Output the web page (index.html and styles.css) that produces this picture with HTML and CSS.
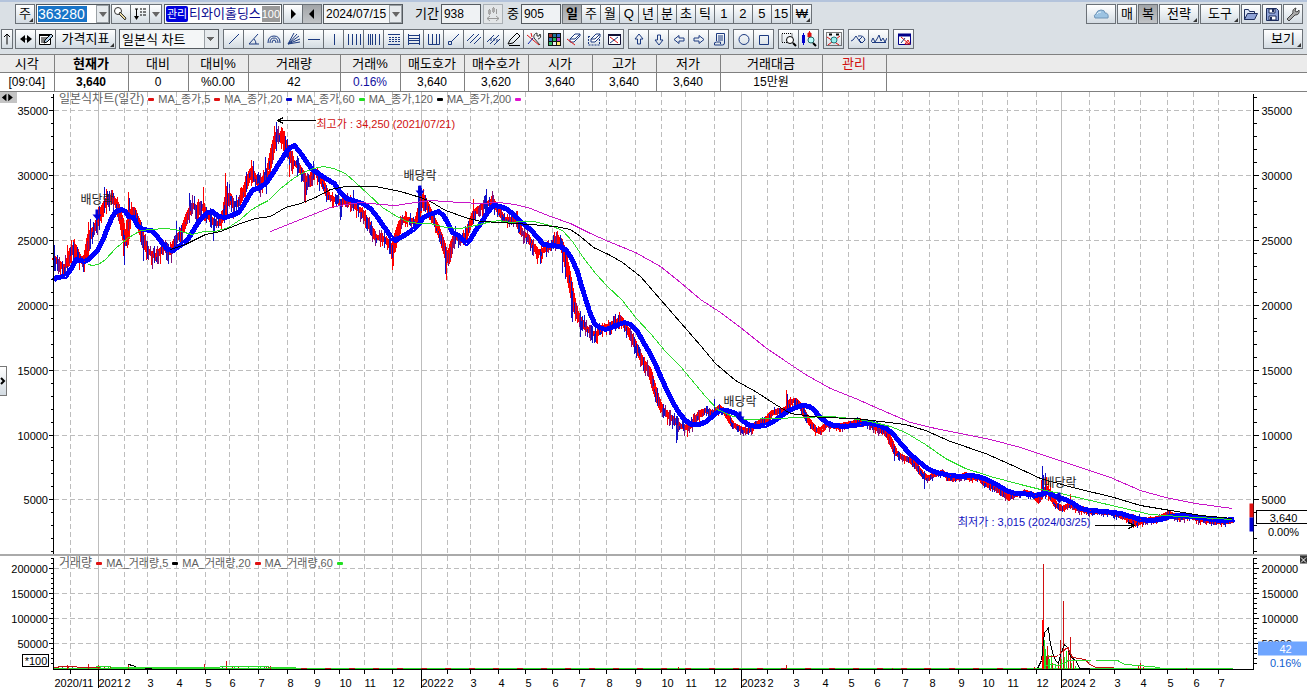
FILE: index.html
```html
<!DOCTYPE html>
<html lang="ko">
<head>
  <meta charset="UTF-8">
  <title>티와이홀딩스 - 종합차트</title>
  <link rel="stylesheet" href="styles.css">
</head>
<body>

<header class="toolbar">
  <div class="bar bar-main">
    <button class="btn corner">주</button>
    <div class="combo code"><input type="text" value="363280" aria-label="종목코드"><button aria-label="종목 목록"><i class="down"></i></button></div>
    <div class="group">
      <button class="btn" aria-label="종목 찾기"><svg viewBox="0 0 16 16"><circle cx="5" cy="5" r="3.5" fill="#fff" stroke="#333"/><path d="M7 6l6 6-1 2-6-6z" fill="#e8d9a0" stroke="#333"/></svg></button>
      <button class="btn" aria-label="정렬"><svg viewBox="0 0 16 16"><path d="M3 3h3M4.500 3v10" stroke="#000" fill="none"/><path d="M2 10h5l-2.500 4z"/><path d="M8 3h2m1 0h3M8 6h2m1 0h3M8 9h2m1 0h3" stroke="#000"/></svg></button>
      <button class="btn slim" aria-label="정렬 목록"><i class="down"></i></button>
    </div>
    <div class="stock"><b>관리</b><span>티와이홀딩스</span><em>100</em></div>
    <div class="group">
      <button class="btn" aria-label="다음"><svg viewBox="0 0 16 16"><path d="M6 3v10l5-5z"/></svg></button>
      <button class="btn dark" aria-label="이전"><svg viewBox="0 0 16 16"><path d="M10 3v10l-5-5z"/></svg></button>
    </div>
    <div class="combo date"><input type="text" value="2024/07/15" aria-label="날짜"><button aria-label="달력"><i class="down"></i></button></div>
    <label class="field first">기간<input type="text" value="938"></label>
    <button class="btn off" disabled aria-label="봉 간격"><svg viewBox="0 0 16 16"><path d="M4.500 3v6M8.500 1v6M11.500 3v5" stroke="#999" fill="none"/><path d="M3 4h3v4H3zM7 2h3v4H7z" fill="#aaa"/><path d="M2 12.500h12M5 10l-3 2.500L5 15M11 10l3 2.500-3 2.500" stroke="#999" fill="none"/></svg></button>
    <label class="field">중<input type="text" value="905"></label>
    <div class="group periods">
      <button class="btn dark on">일</button><button class="btn">주</button><button class="btn">월</button><button class="btn">Q</button><button class="btn">년</button><button class="btn">분</button><button class="btn">초</button><button class="btn">틱</button><button class="btn">1</button><button class="btn">2</button><button class="btn">5</button><button class="btn">15</button>
    </div>
    <button class="btn corner">₩</button>
    <div class="right">
      <button class="btn wide" aria-label="클라우드"><svg viewBox="0 0 16 16"><path d="M2 12q-2-3 1-4 1-4 5-4 4 0 4 3 4 0 3 5z" fill="#9cc3e2" stroke="#6f95b8"/><path d="M4 8q1-2 4-2" stroke="#e2f2fc" fill="none"/></svg></button>
      <button class="btn">매</button>
      <button class="btn dark">복</button>
      <button class="btn menu corner">전략</button>
      <button class="btn menu corner">도구</button>
      <button class="btn" aria-label="열기"><svg viewBox="0 0 16 16"><path d="M1.500 13.500v-10h4l1 2h5v2" fill="#dde5f5" stroke="#1c2c5c"/><path d="M1.500 13.500l3-6h10l-3 6z" fill="#8ea2d6" stroke="#1c2c5c"/></svg></button>
      <button class="btn" aria-label="저장"><svg viewBox="0 0 16 16"><path d="M2.500 2.500h10l2 2v10h-12z" fill="#8ea2d6" stroke="#1c2c5c"/><path d="M5 3h6v4H5zM5 10h7v4H5z" fill="#fff" stroke="#1c2c5c"/><path d="M8 3h2v3H8zM6 11h2v3H6z" fill="#1c2c5c"/></svg></button>
      <button class="btn" aria-label="설정"><svg viewBox="0 0 16 16"><path d="M2 13l6-6q-1-4 3-5l-1 3 2 1 2-2q1 5-4 5l-6 6z" fill="#aaa" stroke="#444"/></svg></button>
    </div>
  </div>

  <div class="bar bar-draw">
    <button class="btn tiny" aria-label="위로"><svg viewBox="0 0 10 16"><path d="M5 13.500V3M2 6l3-3 3 3" stroke="#000" fill="none"/></svg></button>
    <div class="group">
      <button class="btn" aria-label="좌우"><svg viewBox="0 0 16 16"><path d="M7 4v8L2 8zM9 4v8l5-4z"/><path d="M5 8h6" stroke="#000"/></svg></button>
      <button class="btn" aria-label="편집"><svg viewBox="0 0 16 16"><path d="M1.500 3.500h11v10h-11z" fill="#fff" stroke="#000"/><path d="M1 4h12" stroke="#000" stroke-width="2"/><path d="M3 7h7M3 9h5M3 11h3" stroke="#000"/><path d="M6 12l1-3 6-6 2 2-6 6z" fill="#b7d2ea" stroke="#000"/></svg></button>
      <button class="btn indicator corner">가격지표</button>
    </div>
    <select class="kind" aria-label="차트 종류"><option>일본식 차트</option></select>
    <div class="group ink">
      <button class="btn" aria-label="추세선"><svg viewBox="0 0 16 16"><path d="M3 13L13 3"/></svg></button>
      <button class="btn" aria-label="각도선"><svg viewBox="0 0 16 16"><path d="M12 3L3 13h10M8 8q2 2 2 5"/></svg></button>
      <button class="btn" aria-label="원호"><svg viewBox="0 0 16 16"><path d="M2 12q0-7 6-7t6 7M4 12q0-5 4-5t4 5M6 12q0-3 2-3t2 3"/></svg></button>
      <button class="btn" aria-label="부채선"><svg viewBox="0 0 16 16"><path d="M2 13L8 2M2 13l9-10M2 13l11-8M2 13l12-5M2 13l12-2"/></svg></button>
      <button class="btn" aria-label="수평선"><svg viewBox="0 0 16 16"><path d="M2 8.500h12"/></svg></button>
      <button class="btn" aria-label="수직선"><svg viewBox="0 0 16 16"><path d="M8.500 3v11"/></svg></button>
      <button class="btn" aria-label="시간대"><svg viewBox="0 0 16 16"><path d="M2.500 3v11M6.500 3v11M10.500 3v11M14.500 3v11"/></svg></button>
      <button class="btn" aria-label="피보나치 시간대"><svg viewBox="0 0 16 16"><path d="M2.500 3v11M4.500 3v11M6.500 3v11M9.500 3v11M13.500 3v11"/></svg></button>
      <button class="btn" aria-label="되돌림"><svg viewBox="0 0 16 16"><path d="M2 3.500h12M2 13.500h12"/><path d="M3 6.500h11M3 8.500h11M3 10.500h11" stroke-dasharray="2 1"/></svg></button>
      <button class="btn" aria-label="분할선"><svg viewBox="0 0 16 16"><path d="M2.500 3v11M13.500 3v11M3 4.500h10M3 7.500h10M3 9.500h10M3 12.500h10"/></svg></button>
      <button class="btn" aria-label="주기선"><svg viewBox="0 0 16 16"><path d="M2.500 3v10.500h11V3M6.500 3v10M10.500 3v10"/></svg></button>
      <button class="btn" aria-label="선분"><svg viewBox="0 0 16 16"><path d="M2.500 10.500h3v3h-3zM5 11l8-8"/></svg></button>
      <button class="btn" aria-label="평행선"><svg viewBox="0 0 16 16"><path d="M1 10l7-7M4 12l9-9M8 13l7-7"/></svg></button>
      <button class="btn" aria-label="등분선"><svg viewBox="0 0 16 16"><path d="M1 11l7-7M4 13l9-9M8 14l6-6M5 7v3M8 7v3M11 8v3"/></svg></button>
      <button class="btn" aria-label="펜"><svg viewBox="0 0 16 16"><path d="M2 13l2-4 7-7 3 3-7 7zM3 14.500h11" stroke="#000"/></svg></button>
      <button class="btn" aria-label="도구 설정"><svg viewBox="0 0 16 16"><path d="M1 4l12 10M5 2l1 4" stroke="#d11"/><path d="M2 13l5-6" stroke="#12a"/><path d="M14 14L8 7q-1-4 3-5v3h2l1-2q2 4-2 5" stroke="#333"/></svg></button>
      <button class="btn" aria-label="색상"><svg class="solid" viewBox="0 0 16 16"><path fill="#111" d="M2 2h13v13H2z"/><path d="M3 3h3v3H3z" fill="#a33"/><path d="M7 3h3v3H7z" fill="#279"/><path d="M11 3h3v3h-3z" fill="#36c"/><path d="M3 7h3v3H3z" fill="#37b"/><path d="M7 7h3v3H7z" fill="#2b5"/><path d="M11 7h3v3h-3z" fill="#b4c"/><path d="M3 11h3v3H3z" fill="#3b6"/><path d="M7 11h3v3H7z" fill="#eee"/><path d="M11 11h3v3h-3z" fill="#fe6"/></svg></button>
      <button class="btn" aria-label="지우기"><svg viewBox="0 0 16 16"><path d="M4 8l5-5h5l-5 5zM4 8v3h4l6-6V3" fill="#fff"/><path d="M1 8l8 6" stroke="#d11"/></svg></button>
      <button class="btn" aria-label="모두 지우기"><svg viewBox="0 0 16 16"><path d="M2 5.500h3M2.500 5v9h11V8" stroke-dasharray="2 1"/><path d="M5 8l5-5h4l-5 5zM5 8v3h4l5-5V3" fill="#fff"/></svg></button>
      <button class="btn" aria-label="선 삭제"><svg viewBox="0 0 16 16"><path d="M2.500 3.500h12v10h-12z" fill="#fff" stroke="#113"/><path d="M2 4h13" stroke="#113" stroke-width="2"/><path d="M4 6l8 6" stroke="#d11"/><path d="M4 12l8-6"/></svg></button>
    </div>
    <div class="group ink">
      <button class="btn" aria-label="위 화살표"><svg viewBox="0 0 16 16"><path d="M8 3l4 5h-2.500v5h-3V8H4z"/></svg></button>
      <button class="btn" aria-label="아래 화살표"><svg viewBox="0 0 16 16"><path d="M8 14l4-5h-2.500V4h-3v5H4z"/></svg></button>
      <button class="btn" aria-label="왼쪽 화살표"><svg viewBox="0 0 16 16"><path d="M3 8.500l5-4V7h5v3H8v2.500z"/></svg></button>
      <button class="btn" aria-label="오른쪽 화살표"><svg viewBox="0 0 16 16"><path d="M13 8.500l-5-4V7H3v3h5v2.500z"/></svg></button>
      <button class="btn" aria-label="메모"><svg viewBox="0 0 16 16"><path d="M5.500 10V2.500h8V12q0 2-2 2h-8q-1-3 2-3h4v2M7 5h5M7 7h5M7 9h5"/></svg></button>
    </div>
    <div class="group ink">
      <button class="btn" aria-label="원"><svg viewBox="0 0 16 16"><circle cx="8" cy="8.500" r="5"/></svg></button>
      <button class="btn" aria-label="사각형"><svg viewBox="0 0 16 16"><path d="M3.500 4.500h9v9h-9z"/></svg></button>
    </div>
    <div class="group ink">
      <button class="btn" aria-label="영역 확대"><svg viewBox="0 0 16 16"><path d="M1 2.500h10v9H1z" stroke="#000" stroke-dasharray="1 1"/><circle cx="9" cy="9" r="3.500" stroke="#000" fill="#fff"/><path d="M12 12l3 3" stroke="#000" stroke-width="2"/></svg></button>
      <button class="btn" aria-label="봉 확대"><svg viewBox="0 0 16 16"><path d="M2.500 4v8" stroke="#00c" stroke-width="3"/><path d="M2.500 2v12" stroke="#00c"/><path d="M8.500 0v9" stroke="#d11"/><path d="M7 2h3v4H7z" fill="#d11" stroke="#d11"/><circle cx="10" cy="9" r="3" fill="#bff" stroke="#266"/><path d="M12 12l3 3" stroke="#000" stroke-width="2"/></svg></button>
    </div>
    <div class="group ink">
      <button class="btn" aria-label="전체 보기"><svg viewBox="0 0 16 16"><path d="M.5 1.500h15v13H.5z" stroke="#000" stroke-dasharray="1 1"/><path d="M3 3.500h3M10 3.500h3" stroke="#000" stroke-width="2"/><path d="M1 6l12 8M2 14L14 5" stroke="#d11"/><circle cx="8" cy="9" r="3" fill="#9ee" stroke="#277"/></svg></button>
    </div>
    <div class="group ink">
      <button class="btn" aria-label="패턴 검색"><svg viewBox="0 0 16 16"><path d="M0 10l2-1 3-4 4 6 1 1M7 5q6-1 7 4l-3 3-3-3 3-3"/></svg></button>
      <button class="btn" aria-label="패턴"><svg viewBox="0 0 16 16"><path d="M0 11l2-4 2 4 2-3 2-4 2 6 2-3 2 4 2-4M1 11.500h14"/></svg></button>
    </div>
    <div class="group ink">
      <button class="btn" aria-label="차트 닫기"><svg viewBox="0 0 16 16"><path d="M2.500 3.500h12v10h-12z" fill="#fff" stroke="#008"/><path d="M2 4h13" stroke="#008" stroke-width="3"/><path d="M5 6l8 7M9 13l3-4 2 4z" stroke="#d11"/><path d="M5 12l4-5"/></svg></button>
    </div>
    <div class="right"><button class="btn menu corner">보기</button></div>
  </div>
</header>

<table class="quote">
  <colgroup>
    <col class="w54"><col class="w74"><col class="w60"><col class="w60"><col class="w92"><col class="w60">
    <col class="w64"><col class="w64"><col class="w64"><col class="w64"><col class="w64"><col class="w102"><col class="w64"><col>
  </colgroup>
  <thead>
    <tr><th>시각</th><th class="strong">현재가</th><th>대비</th><th>대비%</th><th>거래량</th><th>거래%</th><th>매도호가</th><th>매수호가</th><th>시가</th><th>고가</th><th>저가</th><th>거래대금</th><th class="warn">관리</th><th></th></tr>
  </thead>
  <tbody>
    <tr><td>[09:04]</td><td class="strong">3,640</td><td>0</td><td>%0.00</td><td>42</td><td class="blue">0.16%</td><td>3,640</td><td>3,620</td><td>3,640</td><td>3,640</td><td>3,640</td><td>15만원</td><td></td><td></td></tr>
  </tbody>
</table>

<main class="chart">
  <svg id="plot"></svg>
  <div class="legend price-legend">
    <span class="title">일본식차트(일간)</span><i class="red"></i><span>MA_종가,5</span><i class="red"></i><span>MA_종가,20</span><i class="navy"></i><span>MA_종가,60</span><i class="green"></i><span>MA_종가,120</span><i class="black"></i><span>MA_종가,200</span><i class="pink"></i>
  </div>
  <div class="legend vol-legend">
    <span class="title">거래량</span><i class="red"></i><span>MA_거래량,5</span><i class="black"></i><span>MA_거래량,20</span><i class="red"></i><span>MA_거래량,60</span><i class="green"></i>
  </div>
  <button class="handle" aria-label="축 이동"><svg viewBox="0 0 16 12"><path d="M7 2v8L2 6zM9 2v8l5-4z"/></svg></button>
  <button class="expand" aria-label="패널 열기"><svg viewBox="0 0 6 10"><path d="M1 2l3 3-3 3" fill="none" stroke="#000" stroke-width="2"/></svg></button>
</main>

<script src="chart.js"></script>
</body>
</html>
```
FILE: styles.css
```css
* {
  box-sizing: border-box;
}

body {
  margin: 0;
  height: 100vh;
  display: flex;
  flex-direction: column;
  overflow: hidden;
  background: #fff;
  color: #000;
  font-family: "Liberation Sans", "Noto Sans CJK KR", sans-serif;
  font-size: 12px;
}

button, input, select {
  font-family: inherit;
  font-size: 13px;
  color: #000;
  margin: 0;
  padding: 0;
}

/* toolbars */
.toolbar {
  display: flex;
  flex-direction: column;
  gap: 5px;
  padding: 2px 4px 5px 1px;
  border-top: 2px solid #b4c4dc;
  background: #dae0e5;
}

.bar {
  display: flex;
  align-items: center;
  height: 20px;
}

.bar-main {
  gap: 1px;
  padding-left: 14px;
}

.bar-draw {
  gap: 2px;
}

.group {
  display: flex;
}

.group .btn + .btn {
  margin-left: -1px;
}

.group.ink {
  margin-left: 2px;
}

.right {
  display: flex;
  gap: 1px;
  margin-left: auto;
}

.btn {
  position: relative;
  flex: none;
  display: flex;
  align-items: center;
  justify-content: center;
  width: 20px;
  height: 20px;
  border: 1px solid #6b7177;
  background: linear-gradient(#fff, #e9eef2 50%, #d3dbe2);
  line-height: 16px;
}

.bar-draw .group .btn {
  width: 21px;
}

.btn svg {
  flex: none;
  width: 16px;
  height: 16px;
}

.ink svg {
  fill: none;
  stroke: #1c3a80;
}

.ink svg.solid {
  stroke: none;
}

.btn.corner::after {
  content: "";
  position: absolute;
  right: 1px;
  bottom: 1px;
  border: 2px solid transparent;
  border-right-color: #333;
  border-bottom-color: #333;
}

.btn.slim { width: 13px; }
.btn.tiny { width: 12px; }
.btn.wide { width: 30px; }
.btn.menu { width: 40px; }
.bar-draw .group .btn.indicator { width: 61px; }

.btn.dark {
  background: linear-gradient(#a2a5a8, #c0c3c6);
}

.btn.on {
  font-weight: bold;
}

.btn.off {
  margin-left: 1px;
  border-color: #aab0b5;
  background: #e3e6e8;
}

.btn.tiny svg {
  width: 10px;
}

.down {
  border: 4px solid transparent;
  border-top: 5px solid #666;
  border-bottom: 0;
}

.combo {
  display: flex;
  height: 20px;
  border: 1px solid #555b60;
  background: #fff;
}

.combo input {
  flex: 1;
  min-width: 0;
  border: 0;
  background: #f4f6f7;
  font-size: 12px;
  padding-left: 2px;
}

.combo button {
  display: flex;
  align-items: center;
  justify-content: center;
  width: 13px;
  border: 1px solid #9aa0a5;
  background: #e6eaed;
}

.code {
  width: 74px;
}

.code input {
  flex: none;
  width: 49px;
  margin: 1px 9px 1px 1px;
  padding: 0;
  background: #1874c8;
  color: #fff;
  font-size: 14px;
}

.date { width: 80px; }

.stock {
  display: flex;
  align-items: center;
  justify-content: space-between;
  width: 118px;
  height: 20px;
  margin-left: 1px;
  padding: 1px;
  border: 1px solid #555b60;
  background: #fff;
  color: #0a0a90;
  font-size: 13px;
  line-height: 16px;
  white-space: nowrap;
}

.stock b {
  padding: 0 1px;
  border-radius: 2px;
  background: #0000dc;
  color: #fff;
  font-size: 11px;
  font-weight: normal;
}

.stock em {
  background: #999;
  color: #fff;
  font-size: 11px;
  font-style: normal;
}

.field {
  display: flex;
  align-items: center;
  gap: 2px;
  margin-left: 3px;
  font-size: 13px;
  line-height: 16px;
}

.field.first {
  margin-left: 11px;
}

.field input {
  width: 40px;
  height: 20px;
  padding-left: 2px;
  border: 1px solid #555b60;
  background: #eff2f4;
  font-size: 12px;
}

.kind {
  width: 100px;
  height: 20px;
  margin-left: 1px;
  padding-left: 2px;
  appearance: none;
  border: 1px solid #555b60;
  border-radius: 0;
  background:
    linear-gradient(225deg, #666 50%, transparent 50%) right 7px top 7px / 4px 4px no-repeat,
    linear-gradient(135deg, #666 50%, transparent 50%) right 3px top 7px / 4px 4px no-repeat,
    linear-gradient(90deg, #9aa0a5 1px, #e6eaed 1px) right top / 14px 100% no-repeat,
    #f4f6f7;
}

/* quote line */
.quote {
  width: 100%;
  table-layout: fixed;
  border-collapse: collapse;
  border: 1px solid #808080;
  border-left: 0;
  border-right: 0;
}

.quote th,
.quote td {
  height: 18px;
  padding: 0;
  border-right: 1px solid #808080;
  font-weight: normal;
  line-height: 16px;
  text-align: center;
  white-space: nowrap;
}

.quote th {
  background: #ebebeb;
  border-bottom: 1px solid #808080;
  font-size: 13px;
}

.quote td {
  height: 19px;
}

.quote tr > :last-child { border-right: 0; }
.quote .strong { font-weight: bold; }
.quote .warn { color: #d01010; }
.quote .blue { color: #1010a0; }

.w54 { width: 54px; }
.w60 { width: 60px; }
.w64 { width: 64px; }
.w74 { width: 74px; }
.w92 { width: 92px; }
.w102 { width: 102px; }

/* chart */
.chart {
  position: relative;
  flex: 1;
  min-height: 0;
  overflow: hidden;
}

#plot {
  display: block;
  width: 100%;
  height: 100%;
}

#plot text {
  font-size: 11px;
}

#plot .mark {
  font-size: 12px;
}

.legend {
  position: absolute;
  left: 59px;
  display: flex;
  align-items: center;
  gap: 4px;
  color: #606060;
  font-size: 11px;
  line-height: 14px;
  white-space: nowrap;
}

.legend .title { font-size: 12px; }

.legend i {
  width: 6px;
  height: 3px;
  border-radius: 1px;
}

.legend .red { background: #e01010; }
.legend .navy { background: #0000d0; }
.legend .green { background: #20e020; }
.legend .black { background: #000; }
.legend .pink { background: #e010d0; }

.price-legend { top: 0; }
.vol-legend { bottom: 118px; }

.handle {
  position: absolute;
  left: 0;
  top: 0;
  display: flex;
  width: 17px;
  height: 11px;
  border: 0;
  background: #c4c4c4;
}

.expand {
  position: absolute;
  left: 0;
  top: 46%;
  display: flex;
  align-items: center;
  width: 7px;
  height: 30px;
  border: 1px solid #777;
  border-left: 0;
  background: linear-gradient(#fff, #d3dbe2);
}
```
FILE: chart.js
```js
const plot = document.getElementById("plot");
const NS = "http://www.w3.org/2000/svg";

// design space: x 53..1253, y 92..688
const LEFT = 53, RIGHT = 1253, TOP = 92, BOTTOM = 688;

const months = [
  [70, "2020/11"], [98, "2021"], [124, "2"], [147, "3"], [176, "4"], [205, "5"], [229, "6"], [258, "7"],
  [287, "8"], [314, "9"], [339, "10"], [364, "11"], [392, "12"], [421, "2022"], [447, "2"], [470, "3"],
  [498, "4"], [525, "5"], [552, "6"], [579, "7"], [606, "8"], [635, "9"], [661, "10"], [685, "11"],
  [714, "12"], [741, "2023"], [767, "2"], [793, "3"], [822, "4"], [848, "5"], [874, "6"], [902, "7"],
  [929, "8"], [958, "9"], [982, "10"], [1007, "11"], [1036, "12"], [1061, "2024"], [1089, "2"],
  [1114, "3"], [1140, "4"], [1167, "5"], [1193, "6"], [1218, "7"]
];

const pts = s => s.trim().split(/\s+/).map(p => p.split(",").map(Number));

const price = pts(`53,257 58,262 63,267 67,264 71,249 74,246 78,255 82,261 86,254 88,240 90,232 94,228 97,222 100,212 104,204
 108,198 112,197 117,205 121,220 124,238 126,243 129,215 133,209 138,222 143,240 147,250 152,254 156,256 160,250 164,247 168,252
 172,247 176,238 182,230 187,215 192,205 197,208 203,208 208,215 214,223 219,223 224,213 226,198 229,195 233,205 238,203 243,192
 248,178 251,170 255,178 259,184 264,177 268,170 272,150 276,134 282,137 287,148 291,160 297,165 302,172 306,182 309,184 313,170
 317,172 322,182 328,196 334,199 341,203 347,200 354,205 362,212 369,225 375,237 381,237 387,241 391,248 393,250 396,235 400,222
 405,218 411,220 416,222 419,210 422,196 426,203 430,213 436,225 441,238 445,252 448,260 451,245 455,235 460,240 465,237 469,225
 474,212 481,206 487,203 492,200 498,210 504,219 512,219 517,220 521,232 527,236 532,245 538,252 543,250 548,247 552,245 556,238
 560,240 563,250 567,268 571,290 575,310 580,320 586,328 592,333 597,333 602,327 608,326 615,321 621,319 625,326 632,338 638,352
 643,362 649,370 653,385 657,398 661,408 667,414 674,420 680,426 688,427 694,421 700,412 706,410 713,413 719,407 725,412 732,424
 740,428 747,431 755,424 765,420 772,412 780,410 786,409 790,401 795,400 800,405 805,415 810,423 816,430 822,429 826,424 835,426
 850,423 862,421 870,424 878,429 885,431 890,440 895,452 902,457 910,460 916,466 922,474 928,478 934,474 942,472 950,478 960,477
 965,474 970,478 978,476 985,484 995,487 1002,493 1008,497 1015,494 1025,492 1032,494 1038,500 1042,493 1046,488 1050,495
 1055,504 1062,508 1070,504 1076,508 1085,510 1095,511 1110,512 1125,517 1135,523 1145,520 1158,518 1168,513 1178,517 1190,516
 1200,519 1212,521 1225,521 1234,519`);

const ma60 = pts(`53,280 56,277 65,276 69,271 76,259 84,261 88,259 97,250 103,238 108,225 112,216 116,211 121,209 125,211
 128,216 133,217 137,225 142,229 151,230 156,235 162,243 167,249 173,250 178,246 183,243 188,238 194,228 200,219 206,213 212,211
 218,216 225,217 231,215 238,212 243,205 249,194 253,189 260,187 266,182 271,175 276,167 282,158 286,151 290,147 294,145 298,150
 302,155 307,163 312,169 318,173 325,178 334,183 339,191 346,198 353,200 362,203 370,208 378,218 384,227 391,237 395,240 400,237
 407,233 413,229 418,224 423,217 429,214 438,211 443,215 447,222 452,232 458,235 462,239 466,243 470,239 475,230 481,222 487,212
 493,205 500,206 507,209 514,215 521,222 530,229 537,237 543,244 551,245 560,246 566,250 571,258 577,271 580,282 584,295 589,311
 594,323 599,327 605,329 611,327 618,324 624,322 630,324 637,331 643,342 649,352 655,364 661,378 667,391 673,403 679,413 685,420
 691,424 699,424 706,421 714,414 720,410 727,410 735,413 741,419 747,424 755,426 765,425 773,421 780,416 787,411 795,407 803,405
 809,406 813,409 819,416 826,422 833,425 845,426 860,424 868,422 876,424 886,428 893,434 901,444 909,453 918,461 927,468 933,471
 940,473 950,475 960,476 970,475 978,476 986,479 996,484 1006,490 1014,493 1022,493 1035,495 1047,492 1055,496 1065,499 1073,503
 1080,508 1090,510 1105,511 1120,513 1130,516 1140,519 1150,520 1160,519 1170,516 1180,515 1190,516 1200,517 1212,519 1222,520 1234,519`);

const ma120 = pts(`88,264 92,265 98,264 105,259 115,248 127,238 140,230 152,229 163,228 175,229 184,232 192,234 203,231 215,231
 228,227 240,219 250,210 258,205 268,200 280,188 293,178 303,172 313,168 323,166 333,168 345,173 355,182 367,193 382,207 398,217
 407,221 418,223 430,223 445,227 460,228 475,225 487,222 498,220 510,222 522,221 533,221 550,225 562,230 572,241 582,256 595,273
 607,286 622,300 635,317 650,333 665,351 680,366 695,384 705,396 717,409 730,415 745,419 775,418 800,417 830,416 850,418 870,421
 890,426 905,432 925,444 945,458 965,468 990,476 1020,484 1040,489 1060,493 1090,500 1120,507 1150,514 1180,516 1232,519`);

const ma200 = pts(`170,249 185,244 205,234 220,231 240,223 255,218 270,216 285,207 300,203 315,197 330,189 345,186 375,186 400,191
 420,197 430,201 445,210 465,217 480,221 500,222 530,224 555,226 570,229 580,236 593,247 608,254 622,262 640,276 660,299 680,322
 700,345 715,363 735,380 755,391 775,404 790,413 805,415 820,417 855,418 880,421 905,424 925,430 950,441 985,453 1010,464 1040,478
 1065,485 1080,489 1110,496 1140,505 1170,510 1200,515 1232,518`);

const ma240 = pts(`270,231 285,225 300,219 315,213 330,207 345,204 360,202 380,204 395,205 415,202 430,200 460,202 480,203 498,202
 515,204 530,208 550,216 570,223 590,233 608,241 635,252 660,266 680,282 700,299 720,312 740,327 765,347 790,364 805,374 830,388
 855,398 880,409 910,422 935,428 960,433 990,439 1020,447 1050,457 1080,467 1110,477 1140,490 1165,497 1195,503 1232,508`);

// long wicks: x, high, low, colour
const spikes = [
  [54, 244, 270, "b"], [67, 244, 268, "r"], [71, 239, 262, "r"], [73, 241, 262, "b"], [88, 221, 254, "r"], [90, 218, 248, "b"],
  [104, 186, 212, "b"], [109, 190, 210, "b"], [113, 192, 214, "b"], [123, 230, 255, "r"], [124, 236, 264, "b"], [128, 191, 225, "r"],
  [129, 197, 220, "b"], [143, 235, 260, "b"], [154, 245, 262, "b"], [156, 248, 261, "r"], [176, 220, 245, "b"], [189, 192, 222, "b"],
  [203, 186, 215, "r"], [198, 198, 220, "r"], [213, 218, 240, "b"], [225, 172, 212, "r"], [227, 181, 215, "b"], [229, 183, 205, "b"],
  [251, 159, 185, "r"], [265, 156, 182, "b"], [266, 168, 193, "b"], [276, 121, 150, "b"], [274, 125, 150, "r"], [281, 126, 148, "r"],
  [289, 158, 176, "r"], [304, 170, 201, "p"], [305, 175, 202, "r"], [340, 198, 219, "b"], [341, 198, 216, "b"], [353, 189, 210, "b"],
  [392, 238, 269, "r"], [393, 240, 265, "r"], [445, 245, 273, "b"], [446, 248, 279, "r"], [418, 185, 225, "b"], [419, 185, 215, "b"],
  [421, 187, 210, "b"], [423, 190, 210, "r"], [486, 188, 212, "b"], [473, 198, 218, "r"], [541, 240, 262, "r"], [554, 231, 245, "r"],
  [562, 240, 272, "b"], [565, 250, 278, "b"], [571, 280, 317, "b"], [572, 290, 321, "b"], [580, 310, 336, "b"], [592, 325, 342, "b"],
  [615, 313, 330, "b"], [676, 415, 442, "b"], [677, 415, 439, "b"], [677, 415, 434, "r"], [714, 398, 415, "b"], [786, 389, 413, "r"],
  [787, 393, 410, "b"], [894, 445, 460, "b"], [924, 470, 488, "b"], [1042, 465, 497, "b"], [1043, 474, 495, "b"], [1041, 479, 498, "r"],
  [1045, 472, 498, "b"], [1046, 476, 496, "r"], [1048, 480, 500, "r"], [1050, 482, 498, "r"], [1070, 493, 508, "r"], [1133, 513, 527, "r"],
  [1139, 513, 522, "b"]
];
const colors = { r: "#f00", b: "#1010c8", p: "#80107a" };

// volume bars: x, top, colour
const volumes = [
  [67, 664, "r"], [88, 663, "r"], [98, 664, "r"], [128, 663, "r"], [204, 663, "r"], [226, 660, "r"], [270, 665, "r"], [276, 666, "g"],
  [678, 666, "r"], [786, 664, "r"], [892, 667, "r"], [924, 667, "r"], [1034, 666, "r"], [1042, 619, "r"], [1043, 563, "r"],
  [1044, 639, "g"], [1045, 648, "g"], [1046, 655, "r"], [1047, 645, "r"], [1048, 654, "g"], [1049, 658, "g"], [1051, 654, "g"],
  [1052, 662, "r"], [1055, 663, "g"], [1058, 660, "r"], [1060, 639, "r"], [1061, 658, "g"], [1063, 600, "r"], [1064, 656, "g"],
  [1066, 650, "g"], [1068, 646, "r"], [1070, 636, "r"], [1071, 662, "g"], [1073, 660, "r"], [1075, 665, "g"], [1138, 664, "r"],
  [1140, 662, "r"], [1143, 666, "r"], [1186, 667, "r"]
];

function add(name, attrs, text) {
  const el = document.createElementNS(NS, name);
  for (const k in attrs) el.setAttribute(k, attrs[k]);
  if (text !== undefined) el.textContent = text;
  plot.appendChild(el);
  return el;
}

function at(line, x) {
  for (let i = 1; i < line.length; i++) {
    const [x1, y1] = line[i - 1], [x2, y2] = line[i];
    if (x <= x2) return y1 + (y2 - y1) * (x - x1) / (x2 - x1);
  }
  return line[line.length - 1][1];
}

function draw() {
  plot.innerHTML = "";
  const W = plot.clientWidth, H = plot.clientHeight;
  const kx = (W - 107) / (RIGHT - LEFT), ky = H / (BOTTOM - TOP);
  const X = x => Math.round(LEFT + (x - LEFT) * kx) + 0.5;
  const Y = y => Math.round((y - TOP) * ky) + 0.5;
  const priceY = p => 110 + (35000 - p) * 64.9 / 5000;
  const volY = v => 668 - v * 25 / 50000;

  const seg = (x1, y1, x2, y2, color, more) =>
    add("path", { d: `M${x1} ${y1}L${x2} ${y2}`, stroke: color, fill: "none", "shape-rendering": "crispEdges", ...more });
  const curve = (line, color, width) =>
    add("polyline", { points: line.map(p => X(p[0]) + "," + Y(p[1])).join(" "), stroke: color, "stroke-width": width,
      fill: "none", "stroke-linejoin": "round", "shape-rendering": "crispEdges" });
  const label = (x, y, s, color, more) => add("text", { x, y, fill: color || "#000", ...more }, s);
  const dash = { "stroke-dasharray": "5 3" };

  // grid
  for (let p = 5000; p <= 35000; p += 5000) seg(X(LEFT), Y(priceY(p)), X(RIGHT), Y(priceY(p)), "#bdbdbd", dash);
  for (let v = 50000; v <= 200000; v += 50000) seg(X(LEFT), Y(volY(v)), X(RIGHT), Y(volY(v)), "#bdbdbd", dash);
  months.forEach(([x, name]) => {
    const year = /^20\d\d$/.test(name);
    seg(X(x), 0, X(x), Y(668), "#bdbdbd", year ? {} : dash);
    seg(X(x), Y(669), X(x), year ? H : Y(673), "#000");
    label(name === "2020/11" ? X(54) : X(x), Y(686), name);
  });

  // candles over the short averages
  curve(price, "#f00", 5);
  let seed = 7;
  const rnd = () => (seed = seed * 16807 % 2147483647) / 2147483647;
  const bars = { r: "", b: "", p: "" };
  for (let i = 0; i < 938; i++) {
    const x = LEFT + 1 + i * 1.258;
    const amp = x < 320 ? 9 : x < 560 ? 7 : x < 700 ? 7 : x < 900 ? 4 : 3;
    const c = at(price, x) + (rnd() - 0.5) * amp * 0.6;
    const rising = at(price, x) < at(price, x - 5);
    const r = rnd();
    const key = r < 0.3 ? "p" : (r < 0.72) === rising ? "r" : "b";
    bars[key] += `M${X(x)} ${Y(c - rnd() * amp * 1.3)}V${Y(c + rnd() * amp * 1.3) + 1}`;
  }
  spikes.forEach(([x, hi, lo, k]) => bars[k] += `M${X(x)} ${Y(hi)}V${Y(lo)}`);
  for (const k in bars) add("path", { d: bars[k], stroke: colors[k], "shape-rendering": "crispEdges" });

  curve(ma60, "#00f", 5);
  curve(ma120, "#2bdc2b", 1);
  curve(ma200, "#000", 1);
  curve(ma240, "#c814c8", 1);

  // ex-dividend marks
  [[80, 203, 96], [403, 179, 419], [723, 405, 739], [1043, 486, 1058]].forEach(([x, y, ax]) => {
    label(X(x), Y(y), "배당락", "#222", { class: "mark" });
    add("path", { d: `M${X(ax) - 1} ${Y(y + 6)}h3v5h3l-4 6-5-6h3z`, fill: "#00d" });
  });

  // highest and lowest price
  seg(X(277), Y(120), X(315), Y(120), "#000");
  seg(X(277), Y(120), X(283), Y(117), "#000");
  seg(X(277), Y(120), X(283), Y(123), "#000");
  label(X(316), Y(127), "최고가 : 34,250 (2021/07/21)", "#d01010");
  seg(X(1094), Y(525), X(1134), Y(525), "#000");
  seg(X(1134), Y(525), X(1128), Y(522), "#000");
  seg(X(1134), Y(525), X(1128), Y(528), "#000");
  label(X(1090), Y(525), "최저가 : 3,015 (2024/03/25)", "#1010c0", { "text-anchor": "end" });

  // volume
  const base = Y(668);
  for (let x = 54; x < 300; x += 2) {
    const h = Math.floor(rnd() * 3), k = rnd();
    if (h) seg(X(x), base, X(x), base - h, k < 0.3 ? "#c01010" : k < 0.7 ? "#2bdc2b" : "#555");
  }
  seg(X(LEFT), base, X(1232), base, "#2bdc2b");
  seg(X(300), base, X(1034), base, "#c01010", { "stroke-dasharray": "6 18" });
  volumes.forEach(([x, y, k]) => seg(X(x), Y(y), X(x), base, k === "g" ? "#20e020" : "#d01010"));
  seg(X(1042), Y(619), X(1042), base, "#f00", { "stroke-width": 2 });
  curve(pts("54,667 62,666 90,667 110,666"), "#c01010", 1);
  curve(pts("128,664 132,665 137,667 152,668"), "#000", 1);
  curve(pts("96,666 125,667 150,667 200,667 240,666 296,667"), "#2bdc2b", 1);
  curve(pts("1037,668 1041,660 1044,632 1046,630 1048,627 1049,638 1052,652 1055,660 1058,663 1060,654 1064,644 1067,647 1070,656 1076,661 1079,668 1089,668"), "#000", 1);
  curve(pts("1046,660 1049,656 1055,656 1058,655 1062,651 1067,647 1072,657 1085,659 1089,664 1096,667 1113,667"), "#c01010", 1);
  curve(pts("1045,665 1050,664 1059,665 1068,660 1090,660"), "#2bdc2b", 1);
  curve(pts("1095,660 1117,660 1124,664 1138,665 1160,667"), "#2bdc2b", 1);

  // axes
  const right = X(RIGHT);
  [LEFT, RIGHT].forEach(x => {
    seg(X(x), 2, X(x), Y(553), "#000");
    seg(X(x), Y(557), X(x), Y(669), "#000");
  });
  for (let p = 1000; p <= 36000; p += 1000) {
    const y = Y(priceY(p)), big = p % 5000 === 0, t = big ? 5 : 3;
    seg(X(LEFT) - t, y, X(LEFT), y, "#000");
    seg(right, y, right + t, y, "#000");
    if (big) {
      label(48, y + 4, p, "#000", { "text-anchor": "end" });
      label(right + 8, y + 4, p);
    }
  }
  for (let v = 10000; v <= 220000; v += 10000) {
    const y = Y(volY(v)), big = v % 50000 === 0, t = big ? 5 : 3;
    seg(X(LEFT) - t, y, X(LEFT), y, "#000");
    seg(right, y, right + t, y, "#000");
    if (big) {
      label(48, y + 4, v, "#000", { "text-anchor": "end" });
      label(right + 8, y + 4, v);
    }
  }
  seg(X(LEFT), Y(669), right, Y(669), "#000");
  add("rect", { x: 0, y: Y(554) - 0.5, width: W, height: 2, fill: "#aaa" });

  // unit box and current values
  add("rect", { x: 22.5, y: Y(654), width: 26, height: 12, fill: "#fff", stroke: "#000" });
  label(36, Y(664), "*100", "#000", { "text-anchor": "middle" });
  add("rect", { x: right - 4, y: Y(503), width: 4, height: 14, fill: "#e01010" });
  add("rect", { x: right - 4, y: Y(517), width: 4, height: 14, fill: "#0000d0" });
  add("rect", { x: right + 3, y: Y(510), width: 60, height: 13, fill: "#fff", stroke: "#000" });
  label(right + 30, Y(521), "3,640", "#000", { "text-anchor": "middle" });
  label(right + 30, Y(535), "0.00%", "#000", { "text-anchor": "middle" });
  add("rect", { x: right + 4.5, y: Y(641), width: 60, height: 14, fill: "#6ea5ff" });
  label(right + 32, Y(652), "42", "#fff", { "text-anchor": "middle" });
  label(right + 32, Y(666), "0.16%", "#1060d0", { "text-anchor": "middle" });
  add("rect", { x: W - 7, y: Y(555), width: 7, height: 8, fill: "#333" });
  add("path", { d: `M${W - 6} ${Y(557)}l5 5m0-5l-5 5`, stroke: "#fff" });
}

draw();
window.addEventListener("resize", draw);
```
